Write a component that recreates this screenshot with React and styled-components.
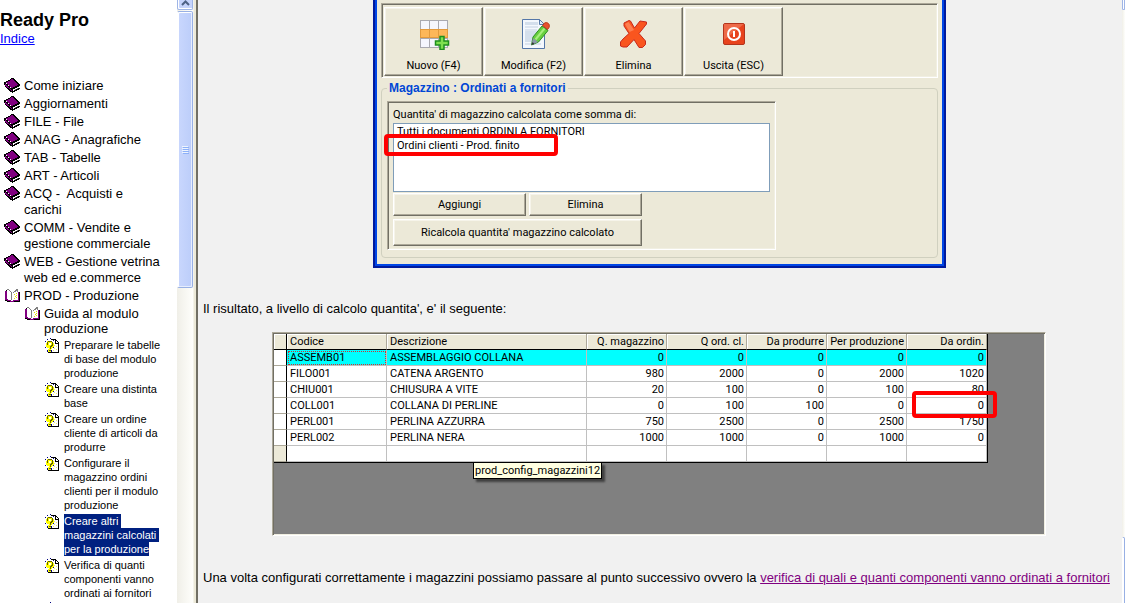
import React from "react";
import styled, { createGlobalStyle, css } from "styled-components";

const GlobalStyle = createGlobalStyle`
	* {
		box-sizing: border-box;
	}
	body {
		margin: 0;
		overflow: hidden;
		font-family: "Liberation Sans", Arial, sans-serif;
		font-size: 13px;
		line-height: 16px;
		color: #000;
		background: #f1f1f1;
	}
`;

const sunken = css`
	border: 1px solid;
	border-color: #aca899 #fff #fff #aca899;
	box-shadow: inset 1px 1px 0 #716f64, inset -1px -1px 0 #f1efe2;
`;

const Page = styled.div`
	display: flex;
	height: 100vh;
	overflow: hidden;
`;

const Sidebar = styled.nav`
	flex: 0 0 177px;
	padding: 9px 14px 0 0;
	background: #fff;
	overflow: hidden;
`;

const SiteTitle = styled.h1`
	margin: 0;
	font-size: 18px;
	line-height: 22px;
`;

const IndexLink = styled.a`
	display: block;
	color: #0000ff;
	margin-bottom: 31px;
`;

const Tree = styled.ul`
	list-style: none;
	margin: 0;
	padding: 0;
`;

const sizes = [
	{ font: 13, line: 16 },
	{ font: 13, line: 15 },
	{ font: 11, line: 14 }
];

const TreeItem = styled.li`
	display: flex;
	align-items: flex-start;
	gap: 4px;
	padding-left: ${props => 4 + props.$level * 20}px;
	margin-bottom: 2px;
	font-size: ${props => sizes[props.$level].font}px;
	line-height: ${props => sizes[props.$level].line}px;
	white-space: pre-wrap;

	svg {
		flex: none;
	}
`;

const TreeLink = styled.a`
	color: ${props => (props.$selected ? "#fff" : "#000")};
	background: ${props => (props.$selected ? "#002080" : "none")};
	padding: 1px 0;
	text-decoration: none;
`;

const ScrollTrack = styled.div`
	flex: 0 0 ${props => props.$width}px;
	display: flex;
	flex-direction: column;
	overflow: hidden;
	background: linear-gradient(90deg, #f0efe8, #fefefb);
`;

const ScrollButton = styled.button`
	flex: none;
	display: flex;
	align-items: flex-start;
	justify-content: center;
	height: 10px;
	width: 100%;
	padding: 0;
	border: 1px solid #9fb5e6;
	border-top: none;
	border-radius: 0 0 2px 2px;
	background: #c6d4fc;
	box-shadow: inset 1px -1px 0 #fff;
`;

const ScrollThumb = styled.div`
	flex: none;
	display: flex;
	flex-direction: column;
	align-items: center;
	justify-content: center;
	gap: 1px;
	height: ${props => props.$height}px;
	margin-top: ${props => props.$top}px;
	border: 1px solid #98b0e4;
	border-left-color: #fff;
	border-radius: 2px;
	box-shadow: inset 1px 1px 0 #fff, inset -1px -1px 0 #e6edfe;
	background: linear-gradient(90deg, #c9d7fd, #bccdfa);
`;

const GripLine = styled.span`
	width: 6px;
	height: 1px;
	background: #eef4fe;
	box-shadow: 1px 1px 0 #8cb0f8;
`;

const FrameEdge = styled.div`
	flex: 0 0 5px;
	border: solid;
	border-width: 0 2px 0 1px;
	border-color: #716f64 #716f64 #716f64 #f4f3ea;
	background: #ece9d8;
`;

const Content = styled.main`
	flex: 1;
	display: flex;
	flex-direction: column;
	min-width: 0;
	padding-left: 5px;
`;

const Paragraph = styled.p`
	margin: ${props => props.$top}px 0 0;
`;

const VisitedLink = styled.a`
	color: #800080;
`;

const AppWindow = styled.section`
	flex: none;
	align-self: center;
	width: 100%;
	max-width: 573px;
	margin-right: 6px;
	padding: 3px 6px 8px;
	border: solid #001a9c;
	border-width: 0 2px 2px;
	box-shadow: inset 2px 0 0 #0046e6, inset -2px -2px 0 #0046e6;
	background: #ece9d8;
	font-family: Roboto, "Liberation Sans", sans-serif;
	font-size: 11px;
`;

const Toolbar = styled.div`
	${sunken}
	display: flex;
	gap: 1px;
	padding: 3px 2px 1px;
`;

const raised = css`
	border: 1px solid;
	border-color: #fff #716f64 #716f64 #fff;
	box-shadow: inset -1px -1px 0 #aca899, inset 1px 1px 0 #f6f4ea;
	background: #ece9d8;
	color: #000;
	font-family: inherit;
	font-size: 11px;
`;

const ToolButton = styled.button`
	${raised}
	display: flex;
	flex-direction: column;
	align-items: center;
	justify-content: space-between;
	width: 99px;
	height: 69px;
	padding: 10px 0 2px;
	line-height: 14px;
`;

const Group = styled.fieldset`
	margin: 2px 0 0;
	padding: 5px 5px 7px;
	border: 1px solid #d0d0bf;
	border-radius: 4px;
`;

const Legend = styled.legend`
	padding: 0 2px;
	color: #0046d5;
	font-family: "Liberation Sans", sans-serif;
	font-size: 12px;
	font-weight: bold;
	line-height: 16px;
`;

const SumPanel = styled.div`
	${sunken}
	position: relative;
	width: 100%;
	max-width: 389px;
	padding: 5px 5px 3px;
`;

const ListLabel = styled.label`
	display: block;
	line-height: 16px;
`;

const ListBox = styled.select`
	display: block;
	width: 100%;
	height: 69px;
	padding: 1px 0 0;
	border: 1px solid #7f9db9;
	border-radius: 0;
	outline: none;
	overflow: hidden;
	background: #fff;
	color: #000;
	font-family: inherit;
	font-size: 11px;

	option {
		min-height: 14px;
		padding: 0 3px;
		line-height: 14px;
	}
`;

const PanelActions = styled.div`
	display: grid;
	grid-template-columns: 133px 113px;
	gap: 3px;
	padding-top: 1px;
`;

const PanelButton = styled.button`
	${raised}
	grid-column: ${props => (props.$wide ? "1 / -1" : "auto")};
	height: ${props => (props.$wide ? 27 : 23)}px;
	padding: 0;
`;

const RedMark = styled.span`
	position: absolute;
	left: ${props => props.$left}px;
	top: ${props => props.$top}px;
	width: ${props => props.$width}px;
	height: ${props => props.$height}px;
	border: 4px solid #ff0000;
	border-radius: 4px;
	pointer-events: none;
`;

const GridFrame = styled.section`
	${sunken}
	flex: none;
	align-self: center;
	position: relative;
	width: 100%;
	max-width: 774px;
	height: 204px;
	margin: 15px 7px 0 0;
	padding: 1px;
	background: #808080;
	font-family: Roboto, "Liberation Sans", sans-serif;
	font-size: 11px;
`;

const Grid = styled.table`
	table-layout: fixed;
	width: 714px;
	border-spacing: 0;
	border-right: 1px solid #000;
	border-bottom: 1px solid #000;
	background: #fff;
`;

const HeadCell = styled.th`
	height: 16px;
	padding: 0 2px 0 3px;
	border-right: 1px solid ${props => (props.$stub ? "#000" : "#aca899")};
	border-bottom: 1px solid #000;
	background: #ece9d8;
	box-shadow: inset 1px 1px 0 #fff;
	font-weight: normal;
	line-height: 15px;
	text-align: ${props => (props.$number ? "right" : "left")};
	white-space: nowrap;
`;

const Cell = styled.td`
	height: 16px;
	padding: 0 2px 0 3px;
	border-right: 1px solid #c0c0c0;
	border-bottom: 1px solid #c0c0c0;
	background: ${props => (props.$active ? "#00ffff" : "#fff")};
	outline: ${props => (props.$focused ? "1px dotted #d03030" : "none")};
	outline-offset: -2px;
	line-height: 15px;
	text-align: ${props => (props.$number ? "right" : "left")};
	white-space: nowrap;
`;

const StubCell = styled.td`
	padding: 0;
	border-right: 1px solid #000;
	border-bottom: 1px solid #aca899;
	background: ${props => (props.$empty ? "#ece9d8" : "#fff")};
`;

const Tooltip = styled.span`
	position: absolute;
	left: 200px;
	top: 129px;
	padding: 0 1px;
	border: 1px solid #000;
	background: #ffffe1;
	box-shadow: 3px 3px 2px rgba(0, 0, 0, 0.5);
	line-height: 15px;
`;

const ClosedBook = () => (
	<svg width="16" height="16" viewBox="0 0 16 16" shapeRendering="crispEdges">
		<path d="M0 4h2V3h2V2h2V1h1V0h3v1h1v1h1v1h1v1h1v1h1v1h1v2h-1v2h1v1h-1v1h-2v1h-2v1h-2v1H8v-1H6v-1H5v-1H4v-1H3v-1H2V9H1V7H0z" fill="#000" />
		<path d="M2 4h2V3h2V2h1V1h2v1h1v1h1v1h1v1h1v1h1v1h-1v1h-2v1H9v1H7V9H6V8H5V7H4V6H3V5H2z" fill="#800080" />
		<path d="M1 6h1v1h1v1h1v1h1v1h1v1h1v1h1v1H7v-1H6v-1H5v-1H3V9H2V8H1z" fill="#800080" />
		<path d="M2 5h1v1H2zM4 7h1v1H4zM6 9h1v1H6z" fill="#fff" />
		<path d="M9 11h2v-1h2V9h2v1h-1v1h-2v1h-2v1H9z" fill="#fff" />
		<path d="M11 11h1v1h-1zM13 10h1v1h-1z" fill="#808080" />
	</svg>
);

const OpenBook = () => (
	<svg width="16" height="15" viewBox="0 0 16 15" shapeRendering="crispEdges">
		<path d="M1 3h2v8h1v1h3v1h2v-1h5V4h1v9h-5v1H6v-1H3v-1H1z" fill="#800080" />
		<path d="M15 4h1v10h-6v-1h5zM2 2h1v1H2zM1 12h2v1H1zM3 13h3v1H3z" fill="#000" />
		<path d="M3 2h2v1h2v1h1v8H6v-1H3zM9 4h1V3h2V1h1v2h1v9H9z" fill="#fff" />
		<path d="M3 1h2v1H3zM5 2h1v1H5zM6 3h1v1H6zM7 4h1v8H7zM9 4h1v1H9zM10 3h1V2h1V1h2v1h-1v1h-1v1h-2zM13 2h1v2h-1z" fill="#808080" />
		<path d="M10 6h1v1h-1zM12 5h1v1h-1zM11 8h1v1h-1zM12 7h1v1h-1zM10 10h1v1h-1zM12 9h1v1h-1z" fill="#e8e000" />
	</svg>
);

const HelpTopic = () => (
	<svg width="16" height="15" viewBox="0 0 16 15" shapeRendering="crispEdges">
		<path d="M4 2h8v3h3v9H4z" fill="#fff" />
		<path d="M7 1h4v1H7zM11 1h1v4h3v1h-4zM12 2h1v1h-1zM13 3h1v1h-1zM14 4h1v11h-1zM4 14h11v1H4z" fill="#000" />
		<path d="M12 3h1v1h-1z" fill="#fff" />
		<path d="M3 3h5v1h1v1h1v4H9v1H8v1H7v3H4v-3h1v-1H3V9H2V5h1z" fill="#ffff00" />
		<path d="M4 3h4v1H4zM3 4h1v3H3zM8 4h1v4H8zM7 7h1v2H7zM6 8h1v3H6zM5 12h2v1H5z" fill="#606000" />
		<path d="M5 5h2v2H5z" fill="#fff" />
		<path d="M1 3h1v1H1zM3 1h1v1H3zM6 0h1v1H6zM1 9h1v1H1zM9 2h1v1H9zM3 12h1v2H3zM7 12h1v2H7zM9 9h1v1H9z" fill="#000080" />
		<path d="M10 7h1v1h-1zM12 8h1v1h-1zM10 10h1v1h-1zM12 11h1v1h-1zM9 12h1v1H9z" fill="#f0f060" />
	</svg>
);

const NewIcon = () => (
	<svg width="32" height="32" viewBox="0 0 32 32">
		<path d="M2 2h28v28H2z" fill="#a9a9b0" />
		<path d="M3 3h8v8H3zM12 3h8v8h-8zM21 3h8v8h-8zM3 21h8v8H3zM12 21h8v8h-8zM21 21h8v8h-8z" fill="#f5f6fd" />
		<path d="M2 11h28v9H2z" fill="#e29a3d" />
		<path d="M3 12h8v7H3zM12 12h8v7h-8zM21 12h8v7h-8z" fill="#fdb759" />
		<path d="M22 18.500h4v4.500h4.500v4H26v4.500h-4V27h-4.500v-4H22z" fill="#7ee04f" stroke="#1e8f1e" strokeWidth="1.500" />
	</svg>
);

const EditIcon = () => (
	<svg width="32" height="32" viewBox="0 0 32 32">
		<path d="M4.500 1.500h17l5 5v24h-22z" fill="#f4f8fd" stroke="#5577a8" />
		<path d="M7 4h13v3H7zM7 13h14v11H7z" fill="#d4dfec" />
		<path d="M7 9h13M7 12h12M7 26h16" stroke="#c3d0e2" />
		<path d="M21.500 1.500v5h5z" fill="#dfeafa" stroke="#5577a8" />
		<path d="M13.500 27l1.500-8L24 8l6 4.500L20.500 24z" fill="#67cf3e" stroke="#2f8f24" />
		<path d="M17.500 21.500L26.500 10.500" stroke="#a6ee7c" strokeWidth="2" />
		<path d="M13.500 27l1.500-7 5 4z" fill="#8b98a8" />
		<path d="M13.500 27l1-3 2 2z" fill="#333" />
		<path d="M24.500 7.500l2-2.500c3-1.500 6 1.500 4.500 4.500l-1.500 2z" fill="#e8502e" stroke="#b83718" />
	</svg>
);

const DeleteIcon = () => (
	<svg width="32" height="32" viewBox="0 0 32 32">
		<path d="M6 5l5-2.500 1.500.5 4 7L22 3l6.500 1v2L21 15.500l6.500 7.500v3.500l-3 3h-3.500L16 21.500 9 29H5l-2.500-1V24l2.500-3 6-5.500L6 8z" fill="#f9551f" stroke="#c8291b" strokeLinejoin="round" />
		<path d="M7 6l3.500-2 5.500 8-4.500 2z" fill="#ff9066" opacity=".7" />
	</svg>
);

const ExitIcon = () => (
	<svg width="32" height="32" viewBox="0 0 32 32">
		<rect x="5.500" y="5.500" width="21" height="21" rx="1.500" fill="#e8431d" stroke="#b3341c" />
		<path d="M6 6h20L6 22z" fill="#f28a6c" opacity=".55" />
		<circle cx="16" cy="16" r="6" fill="none" stroke="#fff" strokeWidth="2" />
		<path d="M16 13v6" stroke="#fff" strokeWidth="2" />
	</svg>
);

const icons = { closed: ClosedBook, open: OpenBook, topic: HelpTopic };

const chapters = [
	{ icon: "closed", level: 0, label: "Come iniziare" },
	{ icon: "closed", level: 0, label: "Aggiornamenti" },
	{ icon: "closed", level: 0, label: "FILE - File" },
	{ icon: "closed", level: 0, label: "ANAG - Anagrafiche" },
	{ icon: "closed", level: 0, label: "TAB - Tabelle" },
	{ icon: "closed", level: 0, label: "ART - Articoli" },
	{ icon: "closed", level: 0, label: "ACQ -  Acquisti e carichi" },
	{ icon: "closed", level: 0, label: "COMM - Vendite e gestione commerciale" },
	{ icon: "closed", level: 0, label: "WEB - Gestione vetrina web ed e.commerce" },
	{ icon: "open", level: 0, label: "PROD - Produzione" },
	{ icon: "open", level: 1, label: "Guida al modulo produzione" },
	{ icon: "topic", level: 2, label: "Preparare le tabelle di base del modulo produzione" },
	{ icon: "topic", level: 2, label: "Creare una distinta base" },
	{ icon: "topic", level: 2, label: "Creare un ordine cliente di articoli da produrre" },
	{ icon: "topic", level: 2, label: "Configurare il magazzino ordini clienti per il modulo produzione" },
	{ icon: "topic", level: 2, label: "Creare altri magazzini calcolati per la produzione", selected: true },
	{ icon: "topic", level: 2, label: "Verifica di quanti componenti vanno ordinati ai fornitori" },
	{ icon: "topic", level: 2, label: "" }
];

const tools = [
	{ icon: NewIcon, label: "Nuovo (F4)" },
	{ icon: EditIcon, label: "Modifica (F2)" },
	{ icon: DeleteIcon, label: "Elimina" },
	{ icon: ExitIcon, label: "Uscita (ESC)" }
];

const columns = [
	{ title: "Codice", width: 100 },
	{ title: "Descrizione", width: 200 },
	{ title: "Q. magazzino", width: 80, number: true },
	{ title: "Q ord. cl.", width: 80, number: true },
	{ title: "Da produrre", width: 80, number: true },
	{ title: "Per produzione", width: 80, number: true },
	{ title: "Da ordin.", width: 80, number: true }
];

const rows = [
	["ASSEMB01", "ASSEMBLAGGIO COLLANA", 0, 0, 0, 0, 0],
	["FILO001", "CATENA ARGENTO", 980, 2000, 0, 2000, 1020],
	["CHIU001", "CHIUSURA A VITE", 20, 100, 0, 100, 80],
	["COLL001", "COLLANA DI PERLINE", 0, 100, 100, 0, 0],
	["PERL001", "PERLINA AZZURRA", 750, 2500, 0, 2500, 1750],
	["PERL002", "PERLINA NERA", 1000, 1000, 0, 1000, 0],
	["", "", "", "", "", "", ""]
];

const Contents = () => (
	<Sidebar>
		<SiteTitle>Ready Pro</SiteTitle>
		<IndexLink href="#indice">Indice</IndexLink>
		<Tree>
			{chapters.map(({ icon, level, label, selected }, i) => {
				const Icon = icons[icon];
				return (
					<TreeItem key={i} $level={level}>
						<Icon />
						<div>{label && <TreeLink href="#" $selected={selected}>{label}</TreeLink>}</div>
					</TreeItem>
				);
			})}
		</Tree>
	</Sidebar>
);

const StockWindow = () => (
	<AppWindow>
		<Toolbar>
			{tools.map(({ icon: Icon, label }) => (
				<ToolButton key={label} type="button"><Icon />{label}</ToolButton>
			))}
		</Toolbar>
		<Group>
			<Legend>Magazzino : Ordinati a fornitori</Legend>
			<SumPanel>
				<ListLabel htmlFor="documents">Quantita' di magazzino calcolata come somma di:</ListLabel>
				<ListBox id="documents" size={4}>
					<option>Tutti i documenti ORDINI A FORNITORI</option>
					<option>Ordini clienti - Prod. finito</option>
				</ListBox>
				<PanelActions>
					<PanelButton type="button">Aggiungi</PanelButton>
					<PanelButton type="button">Elimina</PanelButton>
					<PanelButton type="button" $wide>Ricalcola quantita' magazzino calcolato</PanelButton>
				</PanelActions>
				<RedMark $left={-4} $top={32} $width={174} $height={22} />
			</SumPanel>
		</Group>
	</AppWindow>
);

const StockGrid = () => (
	<GridFrame>
		<Grid>
			<colgroup>
				<col width="13" />
				{columns.map(c => <col key={c.title} width={c.width} />)}
			</colgroup>
			<thead>
				<tr>
					<HeadCell $stub />
					{columns.map(c => <HeadCell key={c.title} $number={c.number}>{c.title}</HeadCell>)}
				</tr>
			</thead>
			<tbody>
				{rows.map((row, r) => (
					<tr key={r}>
						<StubCell $empty={!row[0]} />
						{row.map((value, c) => (
							<Cell key={c} $number={columns[c].number} $active={r === 0} $focused={r === 0 && c === 0}>
								{value}
							</Cell>
						))}
					</tr>
				))}
			</tbody>
		</Grid>
		<RedMark $left={639} $top={58} $width={85} $height={27} />
		<Tooltip>prod_config_magazzini12</Tooltip>
	</GridFrame>
);

export default () => (
	<Page>
		<GlobalStyle />
		<Contents />
		<ScrollTrack $width={16}>
			<ScrollButton type="button" aria-label="Su">
				<svg width="9" height="6" viewBox="0 0 9 6">
					<path d="M1 5l3.500-3.500L8 5" fill="none" stroke="#4d6185" strokeWidth="2" />
				</svg>
			</ScrollButton>
			<ScrollThumb $top={1} $height={277}>
				<GripLine /><GripLine /><GripLine /><GripLine />
			</ScrollThumb>
		</ScrollTrack>
		<FrameEdge />
		<Content>
			<StockWindow />
			<Paragraph $top={33}>Il risultato, a livello di calcolo quantita', e' il seguente:</Paragraph>
			<StockGrid />
			<Paragraph $top={34}>
				Una volta configurati correttamente i magazzini possiamo passare al punto successivo ovvero la{" "}
				<VisitedLink href="#verifica">verifica di quali e quanti componenti vanno ordinati a fornitori</VisitedLink>
			</Paragraph>
		</Content>
		<ScrollTrack $width={3}>
			<ScrollButton type="button" aria-label="Su" />
			<ScrollThumb $top={527} $height={100} />
		</ScrollTrack>
	</Page>
);
